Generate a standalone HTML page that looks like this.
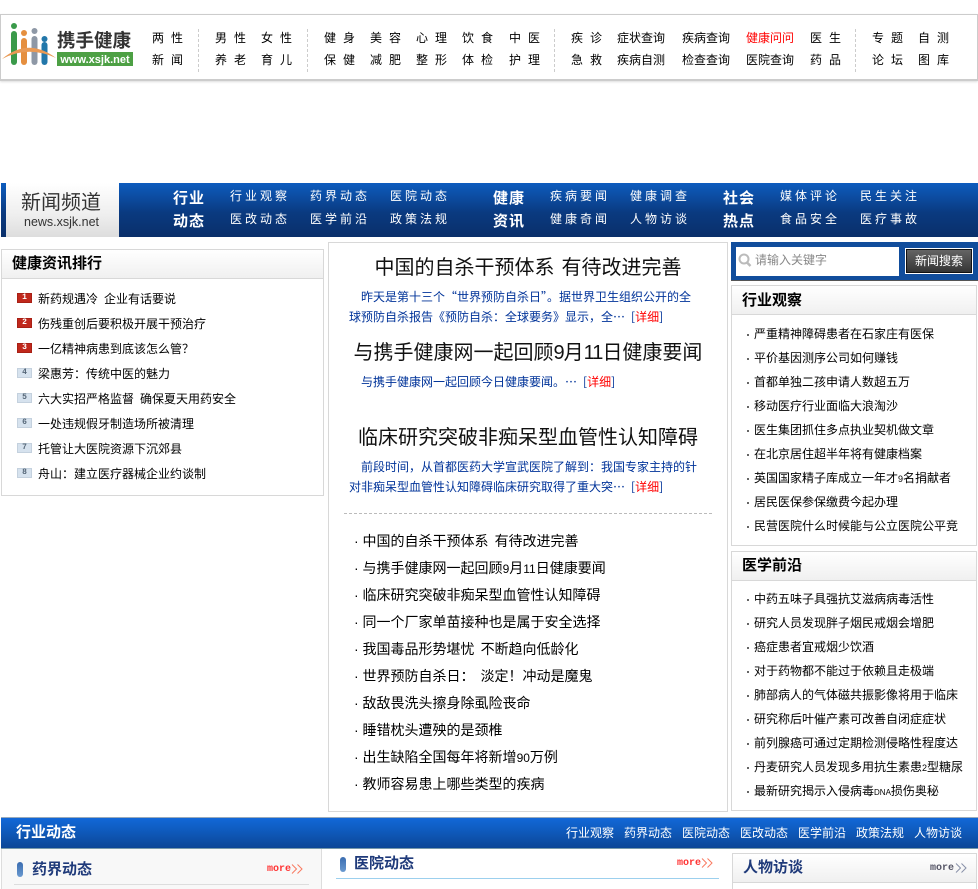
<!DOCTYPE html>
<html lang="zh-CN"><head><meta charset="utf-8"><title>新闻频道</title>
<style>
html,body{margin:0;padding:0;background:#fff;width:978px;height:889px;overflow:hidden}
body{font-family:"Liberation Sans","WenQuanYi Zen Hei","Noto Sans CJK SC",sans-serif;font-size:12px;color:#000}
div{position:absolute}
#w{left:0;top:0;width:978px;height:889px;overflow:hidden}
.t{position:absolute;white-space:nowrap;line-height:14px;height:14px}
.n{letter-spacing:7px}
.w{color:#fff;letter-spacing:3px}
.b{color:#fff;font-size:15px;font-weight:bold;letter-spacing:1px;line-height:16px}
.h{font-size:15px;font-weight:bold;line-height:16px;color:#000;position:absolute;white-space:nowrap}
.ti{position:absolute;white-space:nowrap;font-size:20px;line-height:22px;color:#111;width:400px;left:328px;text-align:center}
.ti u{text-decoration:none;letter-spacing:-1px}
.p{position:absolute;white-space:nowrap;color:#003399;line-height:14px;font-family:"WenQuanYi Zen Hei","Noto Sans CJK SC",sans-serif}
.p i{font-style:normal;color:#f00}
.p em{font-style:normal;color:#003399;margin-left:6px}
.p em+i+em{margin-left:0}
.m{position:absolute;left:354px;font-size:14px;line-height:16px;white-space:nowrap;color:#000}
.sp{display:inline-block;width:6px}
.d{font-size:10px}
.panel{border:1px solid #d8d8d8;box-sizing:border-box;background:#fff}
.ph{position:absolute;left:0;right:0;top:0;background:linear-gradient(#fff,#f0f0f0);border-bottom:1px solid #d8d8d8}
.sep{position:absolute;width:0;border-left:1px dashed #ccc}
.num{position:absolute;left:17px;width:15px;height:10px;box-sizing:border-box;font:bold 8px/8px "Liberation Mono",monospace;text-align:center}
.r{background:#c0281c;border:1px solid #a82015;color:#fff}
.g{background:#d6e2ee;border:1px solid #c4d1de;color:#567}
.dot{position:absolute;width:2px;height:2px;background:#666}
.more{position:absolute;font:bold 10px/10px "Liberation Mono",monospace;white-space:nowrap}
svg{position:absolute}
</style></head><body><div id="w">

<!-- top nav -->
<div class="panel" style="left:0;top:14px;width:978px;height:67px;border:1px solid #ccc;border-bottom:2px solid #ccc;box-shadow:0 1px 2px #ddd"></div>
<svg style="left:0;top:20px" width="135" height="50" viewBox="0 0 135 50">
<g stroke-linecap="round" fill="none" stroke-width="6">
<path d="M14 14V42" stroke="#3a9a4a"/><path d="M24 21V42" stroke="#e58f3f"/><path d="M34.500 19V42" stroke="#8e98a6"/><path d="M44.500 25V42" stroke="#2277aa"/></g>
<circle cx="14" cy="6" r="3" fill="#3a9a4a"/><circle cx="24" cy="13" r="3" fill="#e58f3f"/><circle cx="34.500" cy="11" r="3" fill="#8e98a6"/><circle cx="44.500" cy="19" r="3" fill="#2277aa"/>
<path d="M2 39Q28 17 56 38Q28 25 2 39Z" fill="#e99a55"/>
<rect x="57" y="32" width="76" height="14" fill="#4da044"/>
<text x="95" y="43" text-anchor="middle" font-family="Liberation Sans" font-weight="bold" font-size="11" fill="#fff">www.xsjk.net</text>
<text x="57" y="27" font-family="WenQuanYi Zen Hei,Noto Sans CJK SC" font-weight="bold" font-size="18.500" fill="#333">携手健康</text>
</svg>

<span class="t n" style="left:152px;top:31px">两性</span><span class="t n" style="left:152px;top:53px">新闻</span>
<div class="sep" style="left:198px;top:29px;height:43px"></div>
<span class="t n" style="left:215px;top:31px">男性</span><span class="t n" style="left:261px;top:31px">女性</span>
<span class="t n" style="left:215px;top:53px">养老</span><span class="t n" style="left:261px;top:53px">育儿</span>
<div class="sep" style="left:307px;top:29px;height:43px"></div>
<span class="t n" style="left:324px;top:31px">健身</span><span class="t n" style="left:370px;top:31px">美容</span><span class="t n" style="left:416px;top:31px">心理</span><span class="t n" style="left:462px;top:31px">饮食</span><span class="t n" style="left:509px;top:31px">中医</span>
<span class="t n" style="left:324px;top:53px">保健</span><span class="t n" style="left:370px;top:53px">减肥</span><span class="t n" style="left:416px;top:53px">整形</span><span class="t n" style="left:462px;top:53px">体检</span><span class="t n" style="left:509px;top:53px">护理</span>
<div class="sep" style="left:554px;top:29px;height:43px"></div>
<span class="t n" style="left:571px;top:31px">疾诊</span><span class="t" style="left:617px;top:31px">症状查询</span><span class="t" style="left:682px;top:31px">疾病查询</span><span class="t" style="left:746px;top:31px;color:#f00">健康问问</span><span class="t n" style="left:810px;top:31px">医生</span>
<span class="t n" style="left:571px;top:53px">急救</span><span class="t" style="left:617px;top:53px">疾病自测</span><span class="t" style="left:682px;top:53px">检查查询</span><span class="t" style="left:746px;top:53px">医院查询</span><span class="t n" style="left:810px;top:53px">药品</span>
<div class="sep" style="left:855px;top:29px;height:43px"></div>
<span class="t n" style="left:872px;top:31px">专题</span><span class="t n" style="left:918px;top:31px">自测</span>
<span class="t n" style="left:872px;top:53px">论坛</span><span class="t n" style="left:918px;top:53px">图库</span>

<!-- channel band -->
<div style="left:1px;top:183px;width:977px;height:54px;background:linear-gradient(#0d5cbe,#0a3a80 55%,#0a2f6a)"></div>
<div style="left:6px;top:183px;width:113px;height:54px;background:linear-gradient(#fff,#eee 60%,#ddd)"></div>
<span class="t" style="left:21px;top:192px;font-size:20px;line-height:22px;height:22px;color:#333">新闻频道</span>
<span class="t" style="left:24px;top:215px;font-size:12.500px;color:#333">news.xsjk.net</span>

<span class="t b" style="left:173px;top:191px">行业</span><span class="t b" style="left:173px;top:214px">动态</span>
<span class="t w" style="left:230px;top:189px">行业观察</span><span class="t w" style="left:310px;top:189px">药界动态</span><span class="t w" style="left:390px;top:189px">医院动态</span>
<span class="t w" style="left:230px;top:212px">医改动态</span><span class="t w" style="left:310px;top:212px">医学前沿</span><span class="t w" style="left:390px;top:212px">政策法规</span>
<span class="t b" style="left:493px;top:191px">健康</span><span class="t b" style="left:493px;top:214px">资讯</span>
<span class="t w" style="left:550px;top:189px">疾病要闻</span><span class="t w" style="left:630px;top:189px">健康调查</span>
<span class="t w" style="left:550px;top:212px">健康奇闻</span><span class="t w" style="left:630px;top:212px">人物访谈</span>
<span class="t b" style="left:723px;top:191px">社会</span><span class="t b" style="left:723px;top:214px">热点</span>
<span class="t w" style="left:780px;top:189px">媒体评论</span><span class="t w" style="left:860px;top:189px">民生关注</span>
<span class="t w" style="left:780px;top:212px">食品安全</span><span class="t w" style="left:860px;top:212px">医疗事故</span>

<!-- left panel -->
<div class="panel" style="left:1px;top:249px;width:323px;height:247px"><div class="ph" style="height:28px"></div></div>
<span class="h" style="left:12px;top:256px">健康资讯排行</span>
<span class="num r" style="top:293px">1</span><span class="t" style="left:38px;top:292px">新药规遇冷<span class="sp"></span>企业有话要说</span>
<span class="num r" style="top:318px">2</span><span class="t" style="left:38px;top:317px">伤残重创后要积极开展干预治疗</span>
<span class="num r" style="top:343px">3</span><span class="t" style="left:38px;top:342px">一亿精神病患到底该怎么管&#65311;</span>
<span class="num g" style="top:368px">4</span><span class="t" style="left:38px;top:367px">梁惠芳&#65306;传统中医的魅力</span>
<span class="num g" style="top:393px">5</span><span class="t" style="left:38px;top:392px">六大实招严格监督<span class="sp"></span>确保夏天用药安全</span>
<span class="num g" style="top:418px">6</span><span class="t" style="left:38px;top:417px">一处违规假牙制造场所被清理</span>
<span class="num g" style="top:443px">7</span><span class="t" style="left:38px;top:442px">托管让大医院资源下沉郊县</span>
<span class="num g" style="top:468px">8</span><span class="t" style="left:38px;top:467px">舟山&#65306;建立医疗器械企业约谈制</span>

<!-- middle panel -->
<div class="panel" style="left:328px;top:242px;width:400px;height:570px"></div>
<span class="ti" style="top:257px">中国的自杀干预体系<span class="sp" style="width:7px"></span>有待改进完善</span>
<span class="p" style="left:361px;top:290px">昨天是第十三个&#8220;世界预防自杀日&#8221;&#12290;据世界卫生组织公开的全</span>
<span class="p" style="left:349px;top:310px">球预防自杀报告&#12298;预防自杀&#65306;全球要务&#12299;显示&#65292;全&#8230;<em>[</em><i>详细</i><em>]</em></span>
<span class="ti" style="top:342px">与携手健康网一起回顾<u>9</u>月<u>11</u>日健康要闻</span>
<span class="p" style="left:361px;top:375px">与携手健康网一起回顾今日健康要闻&#12290;&#8230;<em>[</em><i>详细</i><em>]</em></span>
<span class="ti" style="top:427px">临床研究突破非痴呆型血管性认知障碍</span>
<span class="p" style="left:361px;top:460px">前段时间&#65292;从首都医药大学宣武医院了解到&#65306;我国专家主持的针</span>
<span class="p" style="left:349px;top:480px">对非痴呆型血管性认知障碍临床研究取得了重大突&#8230;<em>[</em><i>详细</i><em>]</em></span>
<div style="left:344px;top:513px;width:368px;border-top:1px dashed #bbb"></div>
<div class="m" style="top:533px">· 中国的自杀干预体系<span class="sp"></span>有待改进完善</div>
<div class="m" style="top:560px">· 与携手健康网一起回顾<span class="d" style="font-size:12px">9</span>月<span class="d" style="font-size:12px">11</span>日健康要闻</div>
<div class="m" style="top:587px">· 临床研究突破非痴呆型血管性认知障碍</div>
<div class="m" style="top:614px">· 同一个厂家单苗接种也是属于安全选择</div>
<div class="m" style="top:641px">· 我国毒品形势堪忧<span class="sp"></span>不断趋向低龄化</div>
<div class="m" style="top:668px">· 世界预防自杀日&#65306;<span class="sp"></span>淡定&#65281;冲动是魔鬼</div>
<div class="m" style="top:695px">· 敌敌畏洗头擦身除虱险丧命</div>
<div class="m" style="top:722px">· 睡错枕头遭殃的是颈椎</div>
<div class="m" style="top:749px">· 出生缺陷全国每年将新增<span class="d" style="font-size:12px">90</span>万例</div>
<div class="m" style="top:776px">· 教师容易患上哪些类型的疾病</div>

<!-- search -->
<div style="left:731px;top:242px;width:247px;height:39px;background:#114d9c;border-bottom:1px solid #555;box-sizing:border-box"></div>
<div style="left:736px;top:247px;width:163px;height:29px;background:#fff"></div>
<svg style="left:738px;top:253px" width="14" height="15" viewBox="0 0 14 15"><circle cx="6" cy="6" r="4.500" fill="none" stroke="#bbb" stroke-width="2"/><path d="M9 9.500L12.500 13" stroke="#bbb" stroke-width="2.500"/></svg>
<span class="t" style="left:755px;top:253px;color:#888">请输入关键字</span>
<div style="left:905px;top:248px;width:68px;height:26px;background:linear-gradient(#666,#333);border:1px solid #fff;outline:1px solid #111;outline-offset:-2px;box-sizing:border-box"></div>
<span class="t" style="left:915px;top:254px;color:#fff">新闻搜索</span>

<!-- right panel 1 -->
<div class="panel" style="left:731px;top:285px;width:246px;height:261px"><div class="ph" style="height:28px"></div></div>
<span class="h" style="left:742px;top:293px">行业观察</span>
<div class="dot" style="left:747px;top:334px"></div><span class="t" style="left:754px;top:327px">严重精神障碍患者在石家庄有医保</span>
<div class="dot" style="left:747px;top:358px"></div><span class="t" style="left:754px;top:351px">平价基因测序公司如何赚钱</span>
<div class="dot" style="left:747px;top:382px"></div><span class="t" style="left:754px;top:375px">首都单独二孩申请人数超五万</span>
<div class="dot" style="left:747px;top:406px"></div><span class="t" style="left:754px;top:399px">移动医疗行业面临大浪淘沙</span>
<div class="dot" style="left:747px;top:430px"></div><span class="t" style="left:754px;top:423px">医生集团抓住多点执业契机做文章</span>
<div class="dot" style="left:747px;top:454px"></div><span class="t" style="left:754px;top:447px">在北京居住超半年将有健康档案</span>
<div class="dot" style="left:747px;top:478px"></div><span class="t" style="left:754px;top:471px">英国国家精子库成立一年才<span class="d" style="font-size:9px">9</span>名捐献者</span>
<div class="dot" style="left:747px;top:502px"></div><span class="t" style="left:754px;top:495px">居民医保参保缴费今起办理</span>
<div class="dot" style="left:747px;top:526px"></div><span class="t" style="left:754px;top:519px">民营医院什么时候能与公立医院公平竞</span>

<!-- right panel 2 -->
<div class="panel" style="left:731px;top:551px;width:246px;height:260px"><div class="ph" style="height:28px"></div></div>
<span class="h" style="left:742px;top:558px">医学前沿</span>
<div class="dot" style="left:747px;top:599px"></div><span class="t" style="left:754px;top:592px">中药五味子具强抗艾滋病病毒活性</span>
<div class="dot" style="left:747px;top:623px"></div><span class="t" style="left:754px;top:616px">研究人员发现胖子烟民戒烟会增肥</span>
<div class="dot" style="left:747px;top:647px"></div><span class="t" style="left:754px;top:640px">癌症患者宜戒烟少饮酒</span>
<div class="dot" style="left:747px;top:671px"></div><span class="t" style="left:754px;top:664px">对于药物都不能过于依赖且走极端</span>
<div class="dot" style="left:747px;top:695px"></div><span class="t" style="left:754px;top:688px">肺部病人的气体磁共振影像将用于临床</span>
<div class="dot" style="left:747px;top:719px"></div><span class="t" style="left:754px;top:712px">研究称后叶催产素可改善自闭症症状</span>
<div class="dot" style="left:747px;top:743px"></div><span class="t" style="left:754px;top:736px">前列腺癌可通过定期检测侵略性程度达</span>
<div class="dot" style="left:747px;top:767px"></div><span class="t" style="left:754px;top:760px">丹麦研究人员发现多用抗生素患<span class="d" style="font-size:9px">2</span>型糖尿</span>
<div class="dot" style="left:747px;top:791px"></div><span class="t" style="left:754px;top:784px">最新研究揭示入侵病毒<span class="d" style="font-size:8px">DNA</span>损伤奥秘</span>

<!-- section band -->
<div style="left:1px;top:817px;width:977px;height:32px;background:linear-gradient(#1268d8,#0e58b8 50%,#0c4696);border-top:1px solid #9ab;border-bottom:1px solid #79a;box-sizing:border-box"></div>
<span class="t" style="left:16px;top:825px;font-size:15px;line-height:16px;height:16px;color:#fff;font-weight:bold">行业动态</span>
<span class="t" style="left:566px;top:826px;color:#fff">行业观察</span>
<span class="t" style="left:624px;top:826px;color:#fff">药界动态</span>
<span class="t" style="left:682px;top:826px;color:#fff">医院动态</span>
<span class="t" style="left:740px;top:826px;color:#fff">医改动态</span>
<span class="t" style="left:798px;top:826px;color:#fff">医学前沿</span>
<span class="t" style="left:856px;top:826px;color:#fff">政策法规</span>
<span class="t" style="left:914px;top:826px;color:#fff">人物访谈</span>

<!-- bottom columns -->
<div style="left:1px;top:849px;width:321px;height:40px;background:#f8f8f8;border-right:1px solid #ddd;border-left:1px solid #ddd;box-sizing:border-box"></div>
<div style="left:17px;top:862px;width:6px;height:15px;border-radius:3px;background:linear-gradient(#3a6cb0,#6a9ad0)"></div>
<span class="h" style="left:32px;top:862px;color:#1f3a7a">药界动态</span>
<span class="more" style="left:267px;top:865px;color:#f33">more</span>
<svg style="left:291px;top:864px" width="12" height="10" viewBox="0 0 12 10"><path d="M1 .5L5.500 5L1 9.500M6.500 .5L11 5L6.500 9.500" fill="none" stroke="#f97a60" stroke-width="1"/></svg>
<div style="left:14px;top:884px;width:295px;border-top:1px solid #ddd"></div>

<div style="left:340px;top:857px;width:6px;height:15px;border-radius:3px;background:linear-gradient(#3a6cb0,#6a9ad0)"></div>
<span class="h" style="left:354px;top:856px;color:#1f3a7a">医院动态</span>
<span class="more" style="left:677px;top:859px;color:#f33">more</span>
<svg style="left:701px;top:858px" width="12" height="10" viewBox="0 0 12 10"><path d="M1 .5L5.500 5L1 9.500M6.500 .5L11 5L6.500 9.500" fill="none" stroke="#f97a60" stroke-width="1"/></svg>
<div style="left:336px;top:878px;width:383px;border-top:1px solid #9cd0ee"></div>

<div class="panel" style="left:732px;top:853px;width:245px;height:50px"><div class="ph" style="height:28px"></div></div>
<span class="h" style="left:743px;top:860px;color:#1f3a7a">人物访谈</span>
<span class="more" style="left:930px;top:864px;color:#556">more</span>
<svg style="left:955px;top:863px" width="12" height="10" viewBox="0 0 12 10"><path d="M1 .5L5.500 5L1 9.500M6.500 .5L11 5L6.500 9.500" fill="none" stroke="#8890a8" stroke-width="1"/></svg>

</div></body></html>
